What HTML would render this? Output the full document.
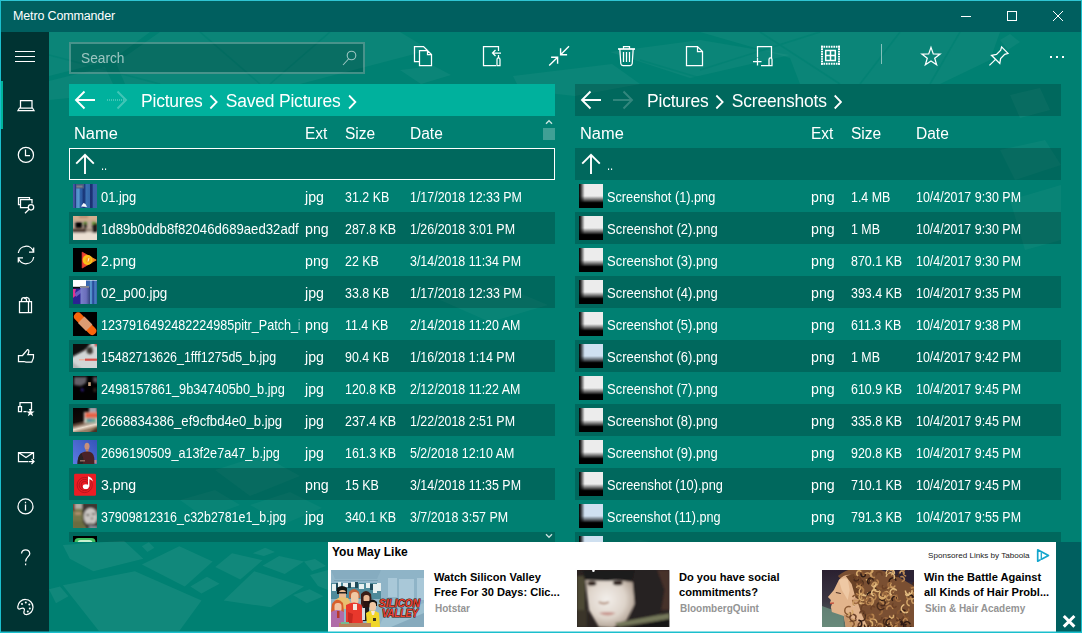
<!DOCTYPE html>
<html><head><meta charset="utf-8"><title>Metro Commander</title>
<style>
*{box-sizing:border-box;margin:0;padding:0}
html,body{width:1082px;height:633px;overflow:hidden}
body{background:#008072;font-family:"Liberation Sans",sans-serif;color:#fff;position:relative}
.frame{position:absolute;left:0;top:0;width:1082px;height:633px;border:1px solid #1bbfcd;border-top-color:#2fc5d3;z-index:50;pointer-events:none;box-shadow:inset 0 -1px 0 rgba(27,191,205,.5)}
.title{position:absolute;left:1px;top:1px;width:1080px;height:31px;background:#005f5f}
.title .tt{position:absolute;left:12px;top:8px;font-size:12.5px;color:#fff;letter-spacing:-0.15px}
.side{position:absolute;left:1px;top:32px;width:48px;height:600px;background:#003332}
.side .act{position:absolute;left:0;top:49px;width:2px;height:48px;background:#00b49c}
.ic{position:absolute;fill:none;stroke:#fff;stroke-width:1.3}
.bgp{position:absolute;left:49px;top:32px;width:1032px;height:600px}
.search{position:absolute;left:69px;top:42px;width:296px;height:32px;border:2px solid rgba(255,255,255,.26);background:rgba(0,0,0,.17)}
.search span{position:absolute;left:10px;top:5px;font-size:15px;color:rgba(255,255,255,.6);transform:scaleX(.915);transform-origin:0 50%}
.pane{position:absolute;top:84px;width:486px;height:458px;overflow:hidden}
.lp{left:69px}.rp{left:575px}
.crumb{position:absolute;left:0;top:0;width:486px;height:32px;background:rgba(0,0,0,.185)}
.lp .crumb{background:#00b19d}
.crumb svg{position:absolute;fill:none;stroke:#fff;stroke-width:1.8}
.crumb .nav{left:0;top:0;width:70px;height:32px;stroke-width:1.9}
.crumb .ct{position:absolute;left:72px;top:7px;font-size:18px;white-space:nowrap;letter-spacing:-0.2px;transform:scaleX(.97);transform-origin:0 50%}
.crumb .sep{position:relative;display:inline-block;width:10px;height:16px;vertical-align:-3px;margin:0 2.2px}
.hdr{position:absolute;left:0;top:32px;width:486px;height:32px;font-size:16px}
.hdr span{position:absolute;top:9px;transform:scaleX(.97);transform-origin:0 50%}
.hdr .c1{transform:scaleX(1.025)}
.c1{left:5px}.c2{left:236px}.c3{left:276px}.c4{left:341px}
.list{position:absolute;left:0;top:64px;width:486px;height:394px;overflow:hidden}
.row{position:relative;height:32px;width:486px;font-size:14.5px;white-space:nowrap}
.row.dk{background:rgba(0,0,0,.185)}
.row span{position:absolute;top:9px}
.row .c1{left:32px;width:216px;overflow:hidden}
.row .c2{transform:scaleX(.978)}
.lp .row.up{border:1px solid #fff}
.row .upa{position:absolute;left:0;top:0;width:32px;height:32px;fill:none;stroke:#fff;stroke-width:1.9}
.row .dots{left:32px;top:10px;font-size:13px}
.lp .row.up .upa{left:-1px;top:-1px}.lp .row.up .dots{left:31px;top:9px}
.fwd{opacity:.2}.lp .fwd{opacity:.26}.lp .fwd .sh{stroke-dasharray:1 1}
.th{position:absolute;left:4px;top:4px;width:24px;height:24px}
.ad{position:absolute;left:328px;top:542px;width:728px;height:90px;background:#fff;color:#000}
.adx{position:absolute;left:1056px;top:542px;width:25px;height:90px;background:#005f5f}

.row span{transform:scaleX(.857);transform-origin:0 50%}
svg.ov{position:absolute;left:0;top:0;width:1082px;height:633px;fill:none;stroke:#fff;stroke-width:1.25;stroke-linejoin:miter}
.ad .h{position:absolute;left:4px;top:3px;font-size:12px;font-weight:bold;color:#000}
.ad .sp{position:absolute;left:600px;top:9px;font-size:8.1px;color:#222;white-space:nowrap}
.ad .t{position:absolute;top:28px;font-size:11.1px;font-weight:bold;line-height:14.5px;color:#000;white-space:nowrap}
.ad .s{position:absolute;top:61px;font-size:10px;font-weight:bold;color:#949494;white-space:nowrap;margin-left:1px}
.ad svg.im{position:absolute;top:28px;width:93px;height:57px}
.scb{position:absolute;left:543px;top:128px;width:12px;height:12px;background:rgba(255,255,255,.25)}
</style></head>
<body>
<svg width="0" height="0" style="position:absolute"><defs>
<linearGradient id="sgx" x1="0" x2="1" y1="0" y2="0"><stop offset="0" stop-color="#000" stop-opacity="1"/><stop offset=".07" stop-color="#000" stop-opacity=".8"/><stop offset=".24" stop-color="#000" stop-opacity="0"/></linearGradient>
<linearGradient id="sgy" x1="0" x2="0" y1="0" y2="1"><stop offset=".5" stop-color="#000" stop-opacity="0"/><stop offset=".78" stop-color="#000" stop-opacity="1"/><stop offset="1" stop-color="#000" stop-opacity="1"/></linearGradient>
</defs></svg>
<div class="title"><span class="tt">Metro Commander</span></div>
<div class="side"><div class="act"></div></div>
<svg class="bgp" viewBox="49 32 1032 600"><g fill="#fff" fill-opacity=".065"><path d="M62.9 545.0L123.9 540.8L143.3 558.8L93.4 571.3L69.8 558.8z"/><path d="M141.9 564.4L179.3 546.3L212.6 561.6L184.8 586.5z"/><path d="M62.9 585.2L134.9 571.3L201.5 600.4L179.3 631.0L98.9 631.0z"/><path d="M190.4 586.5L207.0 576.8L219.5 583.8L201.5 593.5z"/><path d="M215.3 567.1L232.0 553.3L262.5 560.2L240.3 579.6z"/><path d="M223.7 600.4L254.2 571.3L304.0 586.5L270.8 607.3z"/><path d="M262.5 565.7L279.1 556.0L304.0 561.6L284.7 574.0z"/><path d="M141.9 546.3L148.8 542.2L154.4 547.7L147.4 551.9z"/><path d="M49.0 589.3L60.0 586.5L68.4 596.2L56.0 603.2z"/><path d="M252.8 553.3L265.2 547.7L275.0 551.9L263.9 556.0z"/><path d="M293.0 594.9L309.6 589.3L323.5 596.2L306.8 603.2z"/><path d="M304.0 561.6L315.0 559.0L326.0 566.0L312.0 571.0z"/><path d="M310.0 575.0L328.0 570.0L328.0 590.0L318.0 586.0z"/></g><g fill="#fff" fill-opacity=".045"><path d="M49.0 32.0L150.0 32.0L112.0 60.0L49.0 76.0z"/><path d="M160.0 32.0L400.0 32.0L430.0 50.0L300.0 84.0L125.0 84.0L116.0 63.0z"/><path d="M49.0 81.0L105.0 67.0L113.0 84.0L69.0 98.0L49.0 100.0z"/><path d="M400.0 70.0L434.0 66.0L451.0 75.0L421.0 84.0z"/><path d="M513.0 76.0L612.0 64.0L640.0 84.0L575.0 96.0L520.0 90.0z"/><path d="M610.0 52.0L700.0 40.0L790.0 55.0L690.0 78.0z"/><path d="M700.0 32.0L1000.0 32.0L990.0 60.0L940.0 84.0L800.0 84.0L790.0 58.0z"/><path d="M1000.0 40.0L1010.0 34.0L1020.0 42.0L1008.0 50.0z"/><path d="M1010.0 95.0L1040.0 88.0L1050.0 110.0L1020.0 118.0z"/></g><g fill="#fff" fill-opacity=".035"><path d="M215.0 470.0L262.0 455.0L300.0 476.0L250.0 496.0z"/><path d="M250.0 505.0L290.0 492.0L322.0 508.0L284.0 524.0z"/><path d="M180.0 500.0L215.0 490.0L240.0 505.0L205.0 518.0z"/><path d="M440.0 300.0L500.0 285.0L548.0 305.0L490.0 322.0z"/><path d="M1000.0 150.0L1045.0 140.0L1061.0 165.0L1015.0 180.0z"/><path d="M1010.0 200.0L1061.0 185.0L1061.0 240.0L1025.0 250.0z"/><path d="M600.0 545.0L640.0 540.0L650.0 542.0L610.0 542.0z"/></g><g stroke="#008072" stroke-opacity=".7" stroke-width="1.600" fill="none"><path d="M200 32L260 84M330 32L270 84M49 55L160 84M760 32L840 84M900 32L860 84M960 32L930 84M640 60L720 84M820 32L700 70"/></g></svg>
<div class="search"><span>Search</span></div>
<div class="pane lp">
<div class="crumb"><svg class="nav" viewBox="0 0 70 32"><path d="M26 16H7.500M15.500 7.500L7 16l8.500 8.500"/><g class="fwd"><path d="M48.500 7.500L57 16l-8.500 8.500"/><path class="sh" d="M38 16H56.500"/></g></svg><span class="ct">Pictures <svg class="sep" viewBox="0 0 10 16"><path d="M1.5 1.5L8 8l-6.5 6.5"/></svg> Saved Pictures <svg class="sep" viewBox="0 0 10 16"><path d="M1.5 1.5L8 8l-6.5 6.5"/></svg></span></div>
<div class="hdr"><span class="c1">Name</span><span class="c2">Ext</span><span class="c3">Size</span><span class="c4">Date</span></div>
<div class="list">
<div class="row up dk"><svg class="upa" viewBox="0 0 32 32"><path d="M16 26V6.500M7.200 15.600L16 6.800L24.800 15.600"/></svg><span class="dots">..</span></div>
<div class="row"><svg class="th" viewBox="0 0 24 24"><defs><linearGradient id="g1" x1="0" x2="1" y1="0" y2="0"><stop offset="0" stop-color="#4c5ca4"/><stop offset=".08" stop-color="#3a4c98"/><stop offset=".11" stop-color="#1e3a7c"/><stop offset=".15" stop-color="#4f8cc8"/><stop offset=".25" stop-color="#5a9ad0"/><stop offset=".3" stop-color="#2e62a8"/><stop offset=".38" stop-color="#2a58a0"/><stop offset=".42" stop-color="#1a3878"/><stop offset=".5" stop-color="#1c3c80"/><stop offset=".54" stop-color="#3a72b4"/><stop offset=".7" stop-color="#3468ac"/><stop offset=".73" stop-color="#1a2f70"/><stop offset=".8" stop-color="#1c3274"/><stop offset=".84" stop-color="#3a62a8"/><stop offset="1" stop-color="#3c64a8"/></linearGradient><filter id="b1"><feGaussianBlur stdDeviation=".7"/></filter></defs><rect width="24" height="24" fill="url(#g1)"/><g filter="url(#b1)"><rect x="3" y="0" width="8" height="4.500" fill="#4a5a80"/><rect x="3.500" y="1.500" width="6" height="2" fill="#7a8088"/><path d="M8 22.500l2.500-3.500 2 1 1.500 3z" fill="#f4f8fc"/></g></svg><span class="c1" style="transform:scaleX(0.891);width:222.8px">01.jpg</span><span class="c2">jpg</span><span class="c3">31.2 KB</span><span class="c4">1/17/2018 12:33 PM</span></div>
<div class="row dk"><svg class="th" viewBox="0 0 24 24"><defs><filter id="b2"><feGaussianBlur stdDeviation=".8"/></filter><clipPath id="k2"><rect width="24" height="24"/></clipPath></defs><g clip-path="url(#k2)"><rect width="24" height="24" fill="#bcaa9a"/><g filter="url(#b2)"><rect x="-2" y="-2" width="28" height="6.500" fill="#d6ae8e"/><rect x="6" y="0" width="9" height="1.500" fill="#a06a50"/><rect x="-2" y="16" width="28" height="10" fill="#eadfd2"/><rect x="2.500" y="6" width="6.500" height="6" fill="#020202"/><rect x="11" y="7" width="2.500" height="5.500" fill="#1e1a18"/><rect x="10.500" y="5.500" width="3.500" height="2" fill="#5a8a28"/><rect x="19.500" y="7" width="5" height="10" fill="#1a1614"/><rect x="19" y="5.500" width="3.500" height="2.500" fill="#6a9a30"/><rect x="-1" y="13" width="14" height="3.500" fill="#3c2a20"/><rect x="13" y="13.500" width="6" height="2" fill="#8a7a6c"/></g></g></svg><span class="c1" style="transform:scaleX(0.908);width:218.6px">1d89b0ddb8f82046d689aed32adf</span><span class="c2">png</span><span class="c3">287.8 KB</span><span class="c4">1/26/2018 3:01 PM</span></div>
<div class="row"><svg class="th" viewBox="0 0 24 24"><defs><linearGradient id="g3" x1="0" x2="1" y1="0" y2="0"><stop offset="0" stop-color="#f03a34"/><stop offset=".5" stop-color="#f46a22"/><stop offset="1" stop-color="#f8981c"/></linearGradient></defs><rect width="24" height="24" fill="#000"/><path d="M9.200 4.200L23.200 12 9.200 20z" fill="url(#g3)" stroke="url(#g3)" stroke-width=".8" stroke-linejoin="round"/><circle cx="14.600" cy="12" r="5" fill="#f9c21a"/><circle cx="15.200" cy="12" r="2.700" fill="#f8a01c"/><path d="M15 13.500l1-3.500" stroke="#fff4d8" stroke-width=".9"/></svg><span class="c1" style="transform:scaleX(0.968);width:205.1px">2.png</span><span class="c2">png</span><span class="c3">22 KB</span><span class="c4">3/14/2018 11:34 PM</span></div>
<div class="row dk"><svg class="th" viewBox="0 0 24 24"><defs><linearGradient id="g4" x1="0" x2="1" y1="0" y2="0"><stop offset="0" stop-color="#3464ac"/><stop offset=".3" stop-color="#3a6ab0"/><stop offset=".4" stop-color="#5a9ad0"/><stop offset=".52" stop-color="#4a86c4"/><stop offset=".58" stop-color="#2a4a98"/><stop offset=".7" stop-color="#2c50a0"/><stop offset=".76" stop-color="#4a80c0"/><stop offset=".9" stop-color="#3f74b8"/><stop offset="1" stop-color="#2a4488"/></linearGradient><linearGradient id="g4b" x1="0" x2="1" y1="0" y2="0"><stop offset="0" stop-color="#7a82cc"/><stop offset=".6" stop-color="#6a6cba"/><stop offset="1" stop-color="#34447e"/></linearGradient><filter id="b4"><feGaussianBlur stdDeviation=".5"/></filter></defs><rect width="24" height="24" fill="#fff"/><g filter="url(#b4)"><rect x="13" y=".5" width="11.500" height="24" fill="url(#g4)"/><rect x="-1" y="8" width="10" height="17" fill="#2a2292"/><path d="M-1 9h4l-1 4 2 2-3 2-2 2z" fill="#e03092"/><path d="M2 13l6-4v4l-5 4z" fill="#6a5cc0"/><rect x="7.500" y="7" width="9.500" height="18" fill="url(#g4b)"/><rect x="7" y="6" width="9" height="1.800" fill="#8a8a90"/><rect x="0" y="6.800" width="7" height="1.700" fill="#0a0a0a"/></g></svg><span class="c1" style="transform:scaleX(0.924);width:214.8px">02_p00.jpg</span><span class="c2">jpg</span><span class="c3">33.8 KB</span><span class="c4">1/17/2018 12:33 PM</span></div>
<div class="row"><svg class="th" viewBox="0 0 24 24"><rect width="24" height="24" fill="#000"/><path d="M5.100 4.700L19.200 18.800" stroke="#f8660c" stroke-width="8.200" stroke-linecap="round"/><path d="M8.200 7.800L16.200 15.800" stroke="#dc9c72" stroke-width="9"/></svg><span class="c1" style="transform:scaleX(0.870);width:228.2px">1237916492482224985pitr_Patch_i</span><span class="c2">png</span><span class="c3">11.4 KB</span><span class="c4">2/14/2018 11:20 AM</span></div>
<div class="row dk"><svg class="th" viewBox="0 0 24 24"><defs><filter id="b6"><feGaussianBlur stdDeviation=".9"/></filter><clipPath id="k6"><rect width="24" height="24"/></clipPath></defs><g clip-path="url(#k6)"><rect width="24" height="24" fill="#d2d6d6"/><g filter="url(#b6)"><path d="M-3 -3H20L12 6 -3 14z" fill="#0a0808"/><path d="M14 4l5-1.500 1 6-3 2-3.500-2z" fill="#38342e"/><path d="M-2 17L10 26H-2z" fill="#b4b4b4"/><rect x="22" y="-1" width="3" height="3" fill="#b01010"/></g><rect x="12" y="14.600" width="12" height="2.200" fill="#d8524a"/><rect x="6" y="15" width="6" height="1.500" fill="#eab4a4"/></g></svg><span class="c1" style="transform:scaleX(0.857);width:231.6px">15482713626_1fff1275d5_b.jpg</span><span class="c2">jpg</span><span class="c3">90.4 KB</span><span class="c4">1/16/2018 1:14 PM</span></div>
<div class="row"><svg class="th" viewBox="0 0 24 24"><defs><filter id="b7"><feGaussianBlur stdDeviation="1"/></filter><clipPath id="k7"><rect width="24" height="24"/></clipPath></defs><g clip-path="url(#k7)"><rect width="24" height="24" fill="#020202"/><g filter="url(#b7)"><path d="M1 1h13l-1 6-5 3-7-1z" fill="#646068"/><path d="M20 1h5v6l-5-1z" fill="#56525a"/><rect x="21" y="12" width="1.500" height="4" fill="#5a4030"/><path d="M8 12l3 1.500-1 2-2-.5z" fill="#34208a"/></g><rect x="15.200" y="6" width="2.800" height="4" fill="#dab48a" filter="url(#b7)" opacity=".0"/><rect x="15.200" y="6.200" width="2.600" height="3.800" fill="#d8b088" opacity=".9"/></g></svg><span class="c1" style="transform:scaleX(0.880);width:225.6px">2498157861_9b347405b0_b.jpg</span><span class="c2">jpg</span><span class="c3">120.8 KB</span><span class="c4">2/12/2018 11:22 AM</span></div>
<div class="row dk"><svg class="th" viewBox="0 0 24 24"><defs><filter id="b8"><feGaussianBlur stdDeviation=".8"/></filter><linearGradient id="g8" x1="0" x2=".25" y1="0" y2="1"><stop offset="0" stop-color="#060404"/><stop offset=".58" stop-color="#120a08"/><stop offset=".7" stop-color="#6a5040"/><stop offset=".86" stop-color="#eadccc"/><stop offset="1" stop-color="#9a8068"/></linearGradient><clipPath id="k8"><rect width="24" height="24"/></clipPath></defs><g clip-path="url(#k8)"><rect width="24" height="24" fill="url(#g8)"/><g filter="url(#b8)"><rect x="16" y="-1" width="8" height="5" fill="#a4a4ac"/><rect x="11" y="4" width="14" height="11.500" fill="#dcd4cc"/><rect x="12" y="4.500" width="13" height="5.500" fill="#e66446"/><rect x="13" y="10.500" width="10" height="4" fill="#62a48c"/><rect x="15" y="11" width="4" height="2" fill="#3a78a8"/><path d="M14 26L26 18v8z" fill="#4a3024"/></g></g></svg><span class="c1" style="transform:scaleX(0.906);width:219.1px">2668834386_ef9cfbd4e0_b.jpg</span><span class="c2">jpg</span><span class="c3">237.4 KB</span><span class="c4">1/22/2018 2:51 PM</span></div>
<div class="row"><svg class="th" viewBox="0 0 24 24"><defs><filter id="b9"><feGaussianBlur stdDeviation=".7"/></filter><linearGradient id="g9" x1="1" x2="0" y1="0" y2="1"><stop offset="0" stop-color="#3654b8"/><stop offset="1" stop-color="#5c7ae4"/></linearGradient><clipPath id="k9"><rect width="24" height="24"/></clipPath></defs><g clip-path="url(#k9)"><rect width="24" height="24" fill="url(#g9)"/><g filter="url(#b9)"><ellipse cx="14" cy="6.300" rx="2.500" ry="3.600" fill="#c8907a"/><rect x="12.800" y="9" width="2.600" height="3" fill="#b87c68"/><path d="M4.500 25c0-8 2-13.500 9.500-13.500S21.500 17 21.500 25z" fill="#4c2428"/><path d="M4.500 25c0-6 1-10 4-12l2 6-1 6z" fill="#2a2020"/><rect x="21.500" y="20" width="2" height="3.500" fill="#c08878"/><rect x="7" y="20" width="5" height="1.500" fill="#8a6a60"/></g></g></svg><span class="c1" style="transform:scaleX(0.873);width:227.4px">2696190509_a13f2e7a47_b.jpg</span><span class="c2">jpg</span><span class="c3">161.3 KB</span><span class="c4">5/2/2018 12:10 AM</span></div>
<div class="row dk"><svg class="th" viewBox="0 0 24 24"><rect x="1.100" y="1.800" width="21.900" height="21.900" rx="1.300" fill="#ec1c24"/><g fill="none" stroke="#b8141c" stroke-width="1"><circle cx="11.700" cy="13" r="7.600"/><circle cx="11.700" cy="13" r="5.600"/><circle cx="11.700" cy="13" r="3.600"/></g><ellipse cx="12.800" cy="14.700" rx="3" ry="2.400" fill="#fff"/><path d="M15 14.700V4.200c2.500.8 4.600 2.300 4.800 5.300-1.200-1.600-2.600-2.200-3.400-2.300v7.500z" fill="#fff"/></svg><span class="c1" style="transform:scaleX(0.970);width:204.6px">3.png</span><span class="c2">png</span><span class="c3">15 KB</span><span class="c4">3/14/2018 11:35 PM</span></div>
<div class="row"><svg class="th" viewBox="0 0 24 24"><defs><filter id="b11"><feGaussianBlur stdDeviation=".9"/></filter><clipPath id="k11"><rect width="24" height="24"/></clipPath></defs><g clip-path="url(#k11)"><rect width="24" height="24" fill="#76764a"/><g filter="url(#b11)"><rect x="2" y="-1" width="8" height="6" fill="#b4aca4"/><rect x="-1" y="-1" width="3" height="8" fill="#6a3028"/><rect x="2" y="8" width="6" height="3" fill="#b09070"/><rect x="-1" y="17" width="12" height="8" fill="#6a6c40"/><path d="M9 -1h16v26H14L10 18z" fill="#3c3632"/><ellipse cx="17.500" cy="12.500" rx="6.800" ry="8.500" fill="#cac6c2"/><ellipse cx="14.800" cy="11" rx="1.800" ry="1" fill="#5a5650"/><ellipse cx="20.500" cy="10" rx="1.800" ry="1" fill="#5a5650"/><ellipse cx="19" cy="14.500" rx="1.300" ry="1" fill="#6a6660"/><rect x="15" y="19" width="5" height="1.300" fill="#5a5652"/><rect x="16" y="22" width="8" height="3" fill="#8a8c9a"/></g></g></svg><span class="c1" style="transform:scaleX(0.857);width:231.6px">37909812316_c32b2781e1_b.jpg</span><span class="c2">jpg</span><span class="c3">340.1 KB</span><span class="c4">3/7/2018 3:57 PM</span></div>
<div class="row dk"><svg class="th" viewBox="0 0 24 24"><rect width="24" height="24" fill="#000"/><rect x="1.500" y="2" width="21" height="20" rx="4" fill="#3fc060"/><rect x="4.500" y="4" width="15" height="16" rx="3" fill="#c8f0d0"/></svg><span class="c1" style="transform:scaleX(1.000);width:198.5px"></span><span class="c2"></span><span class="c3"></span><span class="c4"></span></div>
</div></div>
<div class="pane rp">
<div class="crumb"><svg class="nav" viewBox="0 0 70 32"><path d="M26 16H7.500M15.500 7.500L7 16l8.500 8.500"/><g class="fwd"><path d="M48.500 7.500L57 16l-8.500 8.500"/><path class="sh" d="M38 16H56.500"/></g></svg><span class="ct">Pictures <svg class="sep" viewBox="0 0 10 16"><path d="M1.5 1.5L8 8l-6.5 6.5"/></svg> Screenshots <svg class="sep" viewBox="0 0 10 16"><path d="M1.5 1.5L8 8l-6.5 6.5"/></svg></span></div>
<div class="hdr"><span class="c1">Name</span><span class="c2">Ext</span><span class="c3">Size</span><span class="c4">Date</span></div>
<div class="list">
<div class="row up dk"><svg class="upa" viewBox="0 0 32 32"><path d="M16 26V6.500M7.200 15.600L16 6.800L24.800 15.600"/></svg><span class="dots">..</span></div>
<div class="row"><svg class="th" viewBox="0 0 24 24"><rect width="24" height="24" fill="#ececec"/><rect width="24" height="24" fill="url(#sgx)"/><rect width="24" height="24" fill="url(#sgy)"/></svg><span class="c1" style="transform:scaleX(0.878);width:226.1px">Screenshot (1).png</span><span class="c2">png</span><span class="c3">1.4 MB</span><span class="c4">10/4/2017 9:30 PM</span></div>
<div class="row dk"><svg class="th" viewBox="0 0 24 24"><rect width="24" height="24" fill="#ececec"/><rect width="24" height="24" fill="url(#sgx)"/><rect width="24" height="24" fill="url(#sgy)"/></svg><span class="c1" style="transform:scaleX(0.898);width:221.0px">Screenshot (2).png</span><span class="c2">png</span><span class="c3">1 MB</span><span class="c4">10/4/2017 9:30 PM</span></div>
<div class="row"><svg class="th" viewBox="0 0 24 24"><rect width="24" height="24" fill="#ececec"/><rect width="24" height="24" fill="url(#sgx)"/><rect width="24" height="24" fill="url(#sgy)"/></svg><span class="c1" style="transform:scaleX(0.898);width:221.0px">Screenshot (3).png</span><span class="c2">png</span><span class="c3">870.1 KB</span><span class="c4">10/4/2017 9:30 PM</span></div>
<div class="row dk"><svg class="th" viewBox="0 0 24 24"><rect width="24" height="24" fill="#ececec"/><rect width="24" height="24" fill="url(#sgx)"/><rect width="24" height="24" fill="url(#sgy)"/></svg><span class="c1" style="transform:scaleX(0.898);width:221.0px">Screenshot (4).png</span><span class="c2">png</span><span class="c3">393.4 KB</span><span class="c4">10/4/2017 9:35 PM</span></div>
<div class="row"><svg class="th" viewBox="0 0 24 24"><rect width="24" height="24" fill="#ececec"/><rect width="24" height="24" fill="url(#sgx)"/><rect width="24" height="24" fill="url(#sgy)"/></svg><span class="c1" style="transform:scaleX(0.898);width:221.0px">Screenshot (5).png</span><span class="c2">png</span><span class="c3">611.3 KB</span><span class="c4">10/4/2017 9:38 PM</span></div>
<div class="row dk"><svg class="th" viewBox="0 0 24 24"><rect width="24" height="24" fill="#cfe0f0"/><rect width="24" height="24" fill="url(#sgx)"/><rect width="24" height="24" fill="url(#sgy)"/></svg><span class="c1" style="transform:scaleX(0.898);width:221.0px">Screenshot (6).png</span><span class="c2">png</span><span class="c3">1 MB</span><span class="c4">10/4/2017 9:42 PM</span></div>
<div class="row"><svg class="th" viewBox="0 0 24 24"><rect width="24" height="24" fill="#ececec"/><rect width="24" height="24" fill="url(#sgx)"/><rect width="24" height="24" fill="url(#sgy)"/></svg><span class="c1" style="transform:scaleX(0.898);width:221.0px">Screenshot (7).png</span><span class="c2">png</span><span class="c3">610.9 KB</span><span class="c4">10/4/2017 9:45 PM</span></div>
<div class="row dk"><svg class="th" viewBox="0 0 24 24"><rect width="24" height="24" fill="#ececec"/><rect width="24" height="24" fill="url(#sgx)"/><rect width="24" height="24" fill="url(#sgy)"/></svg><span class="c1" style="transform:scaleX(0.898);width:221.0px">Screenshot (8).png</span><span class="c2">png</span><span class="c3">335.8 KB</span><span class="c4">10/4/2017 9:45 PM</span></div>
<div class="row"><svg class="th" viewBox="0 0 24 24"><rect width="24" height="24" fill="#ececec"/><rect width="24" height="24" fill="url(#sgx)"/><rect width="24" height="24" fill="url(#sgy)"/></svg><span class="c1" style="transform:scaleX(0.898);width:221.0px">Screenshot (9).png</span><span class="c2">png</span><span class="c3">920.8 KB</span><span class="c4">10/4/2017 9:45 PM</span></div>
<div class="row dk"><svg class="th" viewBox="0 0 24 24"><rect width="24" height="24" fill="#ececec"/><rect width="24" height="24" fill="url(#sgx)"/><rect width="24" height="24" fill="url(#sgy)"/></svg><span class="c1" style="transform:scaleX(0.882);width:225.1px">Screenshot (10).png</span><span class="c2">png</span><span class="c3">710.1 KB</span><span class="c4">10/4/2017 9:45 PM</span></div>
<div class="row"><svg class="th" viewBox="0 0 24 24"><rect width="24" height="24" fill="#cfe0f0"/><rect width="24" height="24" fill="url(#sgx)"/><rect width="24" height="24" fill="url(#sgy)"/></svg><span class="c1" style="transform:scaleX(0.872);width:227.6px">Screenshot (11).png</span><span class="c2">png</span><span class="c3">791.3 KB</span><span class="c4">10/4/2017 9:55 PM</span></div>
<div class="row dk"><svg class="th" viewBox="0 0 24 24"><rect width="24" height="24" fill="#cfe0f0"/><rect width="24" height="24" fill="url(#sgx)"/><rect width="24" height="24" fill="url(#sgy)"/></svg><span class="c1" style="transform:scaleX(1.000);width:198.5px"></span><span class="c2"></span><span class="c3"></span><span class="c4"></span></div>
</div></div>
<div class="ad"><span class="h">You May Like</span><span class="sp">Sponsored Links by Taboola</span>
<svg class="im" style="left:3px" viewBox="0 0 93 57"><rect width="93" height="57" fill="#8fb4c7"/>
<path d="M0 0h50l-4 9H4z" fill="#86acc0"/><path d="M3 10h44v1H3z" fill="#7aa2b6"/>
<rect x="57" y="8" width="9" height="19" fill="#a9c8d8"/><rect x="68" y="9" width="15" height="20" fill="#a9c8d8"/><rect x="86" y="8" width="7" height="22" fill="#a9c8d8"/>
<path d="M52 48L93 33v24H48z" fill="#9dc0d0"/><path d="M60 57l33-14v14z" fill="#86aabd"/>
<path d="M0 13h50v16H0z" fill="#4f8a9a"/><g fill="#e8f0f0"><rect x="1" y="14" width="4" height="7"/><rect x="7" y="12" width="3" height="5"/><rect x="12" y="13" width="5" height="4"/><rect x="20" y="12" width="4" height="5"/><rect x="28" y="14" width="5" height="5"/><rect x="35" y="13" width="4" height="5"/><rect x="42" y="14" width="4" height="9"/><rect x="46" y="13" width="4" height="8"/></g>
<g fill="#1e4a5a"><rect x="5" y="13" width="2" height="8"/><rect x="17" y="13" width="3" height="5"/><rect x="24" y="12" width="3" height="6"/><rect x="39" y="14" width="3" height="6"/></g>
<path d="M6 18q5-4 10 0v6H6z" fill="#141210"/><rect x="8" y="20" width="7" height="10" rx="3" fill="#e8b890"/><rect x="8" y="22" width="7" height="1.500" fill="#222"/><path d="M4 30l5-3 8 1 3 5v6H4z" fill="#e8c070"/>
<path d="M18 22q5-6 10 0l1 6H18z" fill="#c4623a"/><rect x="20" y="22" width="7.500" height="12" rx="3.500" fill="#f0c8a4"/>
<path d="M15 35q8-5 16 0l1 22H15z" fill="#e8382c"/><rect x="22" y="34" width="4" height="6" fill="#f4e8e0"/><path d="M17 42l5 2-1 10-4 1z" fill="#c82820"/>
<path d="M30 24q5-6 10 0l1 10-3 4h-6l-2-4z" fill="#3a1e18"/><rect x="32.500" y="25" width="6" height="7" rx="2.500" fill="#e8b894"/><path d="M32 31h7l-1 6h-5z" fill="#2a1410"/><rect x="32" y="37" width="6" height="14" fill="#1a1a1c"/><rect x="31" y="38" width="3" height="12" fill="#d8dce0"/>
<path d="M1 34q5-8 11-1l1 9H0z" fill="#d8602c"/><rect x="3.500" y="33" width="7" height="9" rx="3" fill="#f0c4a4"/><path d="M0 42q6-4 13 0v15H0z" fill="#b06ca8"/><rect x="6" y="41" width="2.500" height="7" fill="#b83a2a"/>
<path d="M37.500 32q4-5 8.500 0v4h-8.500z" fill="#141210"/><rect x="38.500" y="32" width="6.500" height="9" rx="3" fill="#f0c8a4"/><path d="M35 43q6-5 13 0l1 14H36z" fill="#f0d628"/><path d="M40 41h4l-1 4h-2z" fill="#f4e8e0"/><rect x="42" y="48" width="3" height="3" fill="#3a3420"/>
<rect x="8" y="53" width="32" height="4" fill="#b8845c"/><rect x="10" y="52" width="8" height="2" fill="#78b890"/>
<g font-family="Liberation Sans,sans-serif" font-weight="bold" font-style="italic" font-size="10.500" stroke="#2a0c08" stroke-width="1.100" fill="#ee4430" paint-order="stroke"><text x="48" y="37" textLength="41" lengthAdjust="spacingAndGlyphs">SILICON</text><text x="51" y="46.500" textLength="36" lengthAdjust="spacingAndGlyphs">VALLEY</text></g>
</svg>
<div class="t" style="left:106px">Watch Silicon Valley<br>Free For 30 Days: Clic...</div><div class="s" style="left:106px">Hotstar</div>
<svg class="im" style="left:249px;width:92.5px" viewBox="0 0 93 57" preserveAspectRatio="none"><defs><filter id="fb2" x="-10%" y="-10%" width="120%" height="120%"><feGaussianBlur stdDeviation="1.100"/></filter><radialGradient id="fg2" cx=".42" cy=".45" r=".6"><stop offset="0" stop-color="#f2eeea"/><stop offset=".6" stop-color="#ded4ca"/><stop offset="1" stop-color="#a8988a"/></radialGradient><clipPath id="c2"><rect width="93" height="57"/></clipPath></defs>
<g clip-path="url(#c2)"><rect width="93" height="57" fill="#2b2422"/><g filter="url(#fb2)">
<rect x="76" y="0" width="17" height="40" fill="#46302a"/><rect x="0" y="6" width="8" height="40" fill="#4e4a34"/><rect x="0" y="40" width="10" height="17" fill="#3a342c"/>
<path d="M8 6L58 8L60 30L50 50L36 58L22 57L12 40z" fill="url(#fg2)"/>
<path d="M4 -2H80L88 20L84 44L66 50L52 50L58 34L56 12L30 9L8 10z" fill="#262020"/>
<path d="M6 0h52l-2 9-26 2-22-1z" fill="#1e1a1a"/>
<path d="M38 53L93 43v6L42 57z" fill="#74785a"/><path d="M44 58L93 49v9z" fill="#161616"/>
<ellipse cx="15" cy="13.500" rx="4.500" ry="2.200" fill="#2a1c18"/><ellipse cx="41" cy="13" rx="5" ry="2.300" fill="#2a1c18"/>
<path d="M22 32q5 3 10 0" stroke="#b08c78" stroke-width="2" fill="none"/><path d="M22 43q8-2 17 0q-8 5-17 0z" fill="#c89890"/></g>
<circle cx="16.500" cy=".8" r="1.300" fill="#fff"/></g></svg>
<div class="t" style="left:351px">Do you have social<br>commitments?</div><div class="s" style="left:351px">BloombergQuint</div>
<svg class="im" style="left:494px;width:92px" viewBox="0 0 93 57" preserveAspectRatio="none"><defs><filter id="fb3"><feGaussianBlur stdDeviation=".55"/></filter><linearGradient id="bg3" x1="0" x2="0" y1="0" y2="1"><stop offset="0" stop-color="#2a2030"/><stop offset=".55" stop-color="#3c3844"/><stop offset="1" stop-color="#5c7468"/></linearGradient><clipPath id="c3"><rect width="93" height="57"/></clipPath></defs>
<g clip-path="url(#c3)"><rect width="93" height="57" fill="url(#bg3)"/><path d="M0 36L22 44v13H0z" fill="#6c9080" opacity=".8"/><rect x="60" y="0" width="33" height="12" fill="#2c2234"/>
<g filter="url(#fb3)"><path d="M16 6Q28 -4 50 -3L72 4L93 16V57H40L34 40L30 20z" fill="#7a5030"/>
<path d="M17 10Q22 4 30 5L38 14L36 32L40 44L46 57H24L22 46L10 42L9 37L10 34L8 33L9 30L6 27L12 20z" fill="#e2b48c"/>
<path d="M17 10Q22 7 26 9L28 20L26 30L20 20z" fill="#eec8a4"/><path d="M24 6L32 4L40 16L38 30L34 28L30 14z" fill="#6a4226"/><path d="M22 44L30 48L46 57H24z" fill="#c8966c"/>
<path d="M14 22.500l5 1" stroke="#4a2c20" stroke-width="1"/><path d="M8 33.500l4-.5" stroke="#c0503c" stroke-width="1.400"/><ellipse cx="33.500" cy="31" rx="2" ry="3" fill="#d09c78"/><circle cx="32.500" cy="35.500" r=".9" fill="#e8f0f4"/>
<g fill="none" stroke-width="1.500"><circle cx="47.0" cy="7.1" r="3.4" stroke="#d8aa6c" stroke-dasharray="11.8 9.4" transform="rotate(295 47.0 7.1)"/><circle cx="53.7" cy="12.4" r="3.1" stroke="#b88450" stroke-dasharray="10.9 8.7" transform="rotate(297 53.7 12.4)"/><circle cx="68.5" cy="54.9" r="3.2" stroke="#e4bc80" stroke-dasharray="11.1 8.9" transform="rotate(17 68.5 54.9)"/><circle cx="39.7" cy="31.4" r="2.1" stroke="#e4bc80" stroke-dasharray="7.4 5.9" transform="rotate(51 39.7 31.4)"/><circle cx="69.4" cy="20.3" r="3.1" stroke="#d8aa6c" stroke-dasharray="10.9 8.7" transform="rotate(203 69.4 20.3)"/><circle cx="67.9" cy="27.8" r="3.1" stroke="#a06c40" stroke-dasharray="10.8 8.6" transform="rotate(167 67.9 27.8)"/><circle cx="89.6" cy="19.7" r="2.4" stroke="#8a5a34" stroke-dasharray="8.4 6.7" transform="rotate(251 89.6 19.7)"/><circle cx="41.3" cy="32.5" r="3.1" stroke="#a06c40" stroke-dasharray="10.7 8.6" transform="rotate(262 41.3 32.5)"/><circle cx="44.4" cy="56.8" r="2.1" stroke="#e4bc80" stroke-dasharray="7.3 5.8" transform="rotate(59 44.4 56.8)"/><circle cx="48.3" cy="54.0" r="2.8" stroke="#d8aa6c" stroke-dasharray="9.8 7.9" transform="rotate(275 48.3 54.0)"/><circle cx="64.7" cy="50.5" r="2.6" stroke="#a06c40" stroke-dasharray="8.9 7.1" transform="rotate(213 64.7 50.5)"/><circle cx="65.2" cy="25.4" r="3.8" stroke="#c89860" stroke-dasharray="13.4 10.7" transform="rotate(170 65.2 25.4)"/><circle cx="71.2" cy="1.6" r="3.4" stroke="#6a4028" stroke-dasharray="11.7 9.4" transform="rotate(102 71.2 1.6)"/><circle cx="51.4" cy="38.1" r="1.9" stroke="#6a4028" stroke-dasharray="6.5 5.2" transform="rotate(127 51.4 38.1)"/><circle cx="67.4" cy="27.6" r="2.3" stroke="#c89860" stroke-dasharray="8.1 6.5" transform="rotate(46 67.4 27.6)"/><circle cx="41.6" cy="21.5" r="3.9" stroke="#d8aa6c" stroke-dasharray="13.6 10.9" transform="rotate(59 41.6 21.5)"/><circle cx="52.5" cy="14.7" r="2.1" stroke="#e4bc80" stroke-dasharray="7.5 6.0" transform="rotate(311 52.5 14.7)"/><circle cx="43.8" cy="22.9" r="2.7" stroke="#e4bc80" stroke-dasharray="9.3 7.5" transform="rotate(344 43.8 22.9)"/><circle cx="34.7" cy="8.6" r="2.4" stroke="#4a2c1c" stroke-dasharray="8.2 6.6" transform="rotate(4 34.7 8.6)"/><circle cx="34.3" cy="30.1" r="3.3" stroke="#a06c40" stroke-dasharray="11.4 9.1" transform="rotate(343 34.3 30.1)"/><circle cx="73.0" cy="28.9" r="3.3" stroke="#b88450" stroke-dasharray="11.5 9.2" transform="rotate(164 73.0 28.9)"/><circle cx="85.8" cy="55.1" r="3.4" stroke="#2e1a14" stroke-dasharray="12.0 9.6" transform="rotate(141 85.8 55.1)"/><circle cx="52.3" cy="4.2" r="3.3" stroke="#b88450" stroke-dasharray="11.6 9.3" transform="rotate(68 52.3 4.2)"/><circle cx="93.9" cy="24.4" r="2.1" stroke="#b88450" stroke-dasharray="7.2 5.8" transform="rotate(36 93.9 24.4)"/><circle cx="64.2" cy="30.2" r="4.1" stroke="#b88450" stroke-dasharray="14.3 11.4" transform="rotate(25 64.2 30.2)"/><circle cx="38.8" cy="20.6" r="3.3" stroke="#a06c40" stroke-dasharray="11.6 9.3" transform="rotate(216 38.8 20.6)"/><circle cx="57.7" cy="4.9" r="3.0" stroke="#6a4028" stroke-dasharray="10.4 8.3" transform="rotate(172 57.7 4.9)"/><circle cx="46.1" cy="6.6" r="3.6" stroke="#c89860" stroke-dasharray="12.6 10.1" transform="rotate(172 46.1 6.6)"/><circle cx="73.1" cy="29.0" r="2.3" stroke="#2e1a14" stroke-dasharray="8.0 6.4" transform="rotate(130 73.1 29.0)"/><circle cx="73.0" cy="52.8" r="3.6" stroke="#c89860" stroke-dasharray="12.7 10.1" transform="rotate(352 73.0 52.8)"/><circle cx="85.3" cy="39.8" r="2.4" stroke="#a06c40" stroke-dasharray="8.5 6.8" transform="rotate(326 85.3 39.8)"/><circle cx="49.3" cy="11.4" r="3.1" stroke="#2e1a14" stroke-dasharray="10.8 8.7" transform="rotate(118 49.3 11.4)"/><circle cx="39.8" cy="46.7" r="4.2" stroke="#4a2c1c" stroke-dasharray="14.6 11.7" transform="rotate(290 39.8 46.7)"/><circle cx="82.1" cy="42.4" r="2.3" stroke="#2e1a14" stroke-dasharray="8.2 6.6" transform="rotate(177 82.1 42.4)"/><circle cx="75.9" cy="57.4" r="3.7" stroke="#6a4028" stroke-dasharray="12.9 10.3" transform="rotate(93 75.9 57.4)"/><circle cx="73.2" cy="55.4" r="2.9" stroke="#a06c40" stroke-dasharray="10.1 8.0" transform="rotate(343 73.2 55.4)"/><circle cx="49.9" cy="11.2" r="2.3" stroke="#4a2c1c" stroke-dasharray="8.2 6.6" transform="rotate(121 49.9 11.2)"/><circle cx="58.3" cy="57.1" r="3.3" stroke="#b88450" stroke-dasharray="11.4 9.1" transform="rotate(172 58.3 57.1)"/><circle cx="70.4" cy="46.0" r="2.0" stroke="#d8aa6c" stroke-dasharray="7.0 5.6" transform="rotate(327 70.4 46.0)"/><circle cx="79.5" cy="43.0" r="2.9" stroke="#8a5a34" stroke-dasharray="10.3 8.3" transform="rotate(156 79.5 43.0)"/><circle cx="69.1" cy="3.2" r="4.1" stroke="#e4bc80" stroke-dasharray="14.2 11.4" transform="rotate(166 69.1 3.2)"/><circle cx="57.0" cy="37.4" r="3.3" stroke="#6a4028" stroke-dasharray="11.4 9.1" transform="rotate(236 57.0 37.4)"/><circle cx="48.9" cy="30.9" r="2.1" stroke="#b88450" stroke-dasharray="7.4 5.9" transform="rotate(287 48.9 30.9)"/><circle cx="75.6" cy="4.2" r="2.1" stroke="#4a2c1c" stroke-dasharray="7.5 6.0" transform="rotate(297 75.6 4.2)"/><circle cx="39.0" cy="13.1" r="2.5" stroke="#4a2c1c" stroke-dasharray="8.8 7.0" transform="rotate(274 39.0 13.1)"/><circle cx="47.1" cy="30.7" r="3.8" stroke="#b88450" stroke-dasharray="13.3 10.6" transform="rotate(327 47.1 30.7)"/><circle cx="49.1" cy="25.5" r="3.2" stroke="#2e1a14" stroke-dasharray="11.2 9.0" transform="rotate(151 49.1 25.5)"/><circle cx="89.2" cy="28.1" r="3.1" stroke="#2e1a14" stroke-dasharray="10.8 8.6" transform="rotate(183 89.2 28.1)"/><circle cx="86.0" cy="44.6" r="3.3" stroke="#8a5a34" stroke-dasharray="11.4 9.1" transform="rotate(62 86.0 44.6)"/><circle cx="57.6" cy="41.5" r="3.1" stroke="#a06c40" stroke-dasharray="11.0 8.8" transform="rotate(245 57.6 41.5)"/><circle cx="61.7" cy="26.9" r="3.7" stroke="#2e1a14" stroke-dasharray="12.8 10.3" transform="rotate(20 61.7 26.9)"/><circle cx="37.6" cy="0.5" r="2.0" stroke="#6a4028" stroke-dasharray="7.1 5.7" transform="rotate(202 37.6 0.5)"/><circle cx="78.0" cy="52.7" r="2.9" stroke="#2e1a14" stroke-dasharray="10.0 8.0" transform="rotate(218 78.0 52.7)"/><circle cx="38.2" cy="14.6" r="3.0" stroke="#6a4028" stroke-dasharray="10.6 8.5" transform="rotate(182 38.2 14.6)"/><circle cx="41.6" cy="29.4" r="3.9" stroke="#c89860" stroke-dasharray="13.7 10.9" transform="rotate(332 41.6 29.4)"/><circle cx="53.6" cy="21.5" r="2.6" stroke="#4a2c1c" stroke-dasharray="9.0 7.2" transform="rotate(154 53.6 21.5)"/><circle cx="39.1" cy="16.2" r="2.1" stroke="#8a5a34" stroke-dasharray="7.3 5.9" transform="rotate(338 39.1 16.2)"/><circle cx="69.7" cy="20.0" r="2.4" stroke="#8a5a34" stroke-dasharray="8.4 6.7" transform="rotate(348 69.7 20.0)"/><circle cx="39.6" cy="55.2" r="2.8" stroke="#6a4028" stroke-dasharray="9.6 7.7" transform="rotate(58 39.6 55.2)"/><circle cx="71.4" cy="11.4" r="3.5" stroke="#2e1a14" stroke-dasharray="12.2 9.8" transform="rotate(145 71.4 11.4)"/><circle cx="53.9" cy="19.4" r="2.0" stroke="#a06c40" stroke-dasharray="7.1 5.7" transform="rotate(7 53.9 19.4)"/><circle cx="63.3" cy="24.4" r="1.8" stroke="#a06c40" stroke-dasharray="6.5 5.2" transform="rotate(186 63.3 24.4)"/><circle cx="45.0" cy="55.6" r="2.1" stroke="#4a2c1c" stroke-dasharray="7.2 5.8" transform="rotate(349 45.0 55.6)"/><circle cx="26.8" cy="44.7" r="2.4" stroke="#8a5a34" stroke-dasharray="8.6 6.9" transform="rotate(295 26.8 44.7)"/><circle cx="84.3" cy="38.6" r="4.1" stroke="#e4bc80" stroke-dasharray="14.2 11.4" transform="rotate(53 84.3 38.6)"/><circle cx="89.3" cy="32.2" r="3.5" stroke="#d8aa6c" stroke-dasharray="12.2 9.7" transform="rotate(100 89.3 32.2)"/><circle cx="80.8" cy="9.0" r="2.4" stroke="#b88450" stroke-dasharray="8.6 6.8" transform="rotate(228 80.8 9.0)"/><circle cx="80.9" cy="3.0" r="2.0" stroke="#d8aa6c" stroke-dasharray="6.9 5.5" transform="rotate(163 80.9 3.0)"/><circle cx="48.1" cy="31.2" r="4.0" stroke="#c89860" stroke-dasharray="14.1 11.3" transform="rotate(223 48.1 31.2)"/><circle cx="27.1" cy="40.6" r="4.1" stroke="#8a5a34" stroke-dasharray="14.2 11.3" transform="rotate(94 27.1 40.6)"/><circle cx="36.9" cy="53.9" r="3.3" stroke="#2e1a14" stroke-dasharray="11.6 9.3" transform="rotate(273 36.9 53.9)"/><circle cx="44.6" cy="28.0" r="2.2" stroke="#a06c40" stroke-dasharray="7.8 6.2" transform="rotate(289 44.6 28.0)"/><circle cx="59.9" cy="56.7" r="3.0" stroke="#4a2c1c" stroke-dasharray="10.6 8.5" transform="rotate(336 59.9 56.7)"/><circle cx="31.5" cy="47.1" r="2.8" stroke="#6a4028" stroke-dasharray="9.9 7.9" transform="rotate(196 31.5 47.1)"/><circle cx="87.1" cy="56.2" r="2.5" stroke="#4a2c1c" stroke-dasharray="8.9 7.1" transform="rotate(353 87.1 56.2)"/><circle cx="48.3" cy="47.9" r="3.5" stroke="#8a5a34" stroke-dasharray="12.2 9.8" transform="rotate(145 48.3 47.9)"/><circle cx="48.7" cy="1.3" r="2.1" stroke="#d8aa6c" stroke-dasharray="7.4 5.9" transform="rotate(225 48.7 1.3)"/><circle cx="86.5" cy="23.8" r="1.9" stroke="#e4bc80" stroke-dasharray="6.8 5.4" transform="rotate(313 86.5 23.8)"/><circle cx="71.6" cy="14.9" r="2.4" stroke="#c89860" stroke-dasharray="8.3 6.7" transform="rotate(16 71.6 14.9)"/><circle cx="37.2" cy="14.1" r="1.8" stroke="#a06c40" stroke-dasharray="6.3 5.1" transform="rotate(346 37.2 14.1)"/><circle cx="93.1" cy="30.8" r="2.4" stroke="#c89860" stroke-dasharray="8.4 6.7" transform="rotate(78 93.1 30.8)"/><circle cx="37.0" cy="18.1" r="2.0" stroke="#c89860" stroke-dasharray="7.0 5.6" transform="rotate(180 37.0 18.1)"/><circle cx="38.3" cy="28.3" r="1.8" stroke="#c89860" stroke-dasharray="6.3 5.1" transform="rotate(294 38.3 28.3)"/><circle cx="34.2" cy="33.2" r="2.7" stroke="#c89860" stroke-dasharray="9.6 7.7" transform="rotate(109 34.2 33.2)"/><circle cx="40.5" cy="33.1" r="3.1" stroke="#8a5a34" stroke-dasharray="10.7 8.6" transform="rotate(236 40.5 33.1)"/><circle cx="74.8" cy="50.7" r="2.7" stroke="#a06c40" stroke-dasharray="9.6 7.7" transform="rotate(259 74.8 50.7)"/><circle cx="59.1" cy="15.1" r="3.3" stroke="#8a5a34" stroke-dasharray="11.5 9.2" transform="rotate(15 59.1 15.1)"/><circle cx="83.3" cy="51.5" r="3.3" stroke="#2e1a14" stroke-dasharray="11.6 9.3" transform="rotate(50 83.3 51.5)"/><circle cx="61.2" cy="28.3" r="3.8" stroke="#b88450" stroke-dasharray="13.3 10.7" transform="rotate(297 61.2 28.3)"/><circle cx="65.5" cy="51.6" r="3.4" stroke="#4a2c1c" stroke-dasharray="12.0 9.6" transform="rotate(30 65.5 51.6)"/><circle cx="92.1" cy="20.6" r="2.9" stroke="#b88450" stroke-dasharray="10.1 8.1" transform="rotate(225 92.1 20.6)"/><circle cx="68.5" cy="38.8" r="3.0" stroke="#b88450" stroke-dasharray="10.4 8.3" transform="rotate(164 68.5 38.8)"/><circle cx="29.0" cy="54.0" r="4.0" stroke="#d8aa6c" stroke-dasharray="13.8 11.1" transform="rotate(237 29.0 54.0)"/><circle cx="28.7" cy="42.2" r="2.4" stroke="#d8aa6c" stroke-dasharray="8.4 6.7" transform="rotate(304 28.7 42.2)"/><circle cx="40.7" cy="43.4" r="2.4" stroke="#6a4028" stroke-dasharray="8.2 6.6" transform="rotate(177 40.7 43.4)"/><circle cx="51.2" cy="26.7" r="3.4" stroke="#b88450" stroke-dasharray="12.0 9.6" transform="rotate(222 51.2 26.7)"/><circle cx="69.6" cy="2.6" r="2.2" stroke="#c89860" stroke-dasharray="7.5 6.0" transform="rotate(234 69.6 2.6)"/><circle cx="73.2" cy="35.3" r="2.1" stroke="#6a4028" stroke-dasharray="7.4 5.9" transform="rotate(21 73.2 35.3)"/><circle cx="43.1" cy="38.3" r="3.5" stroke="#6a4028" stroke-dasharray="12.1 9.7" transform="rotate(104 43.1 38.3)"/><circle cx="60.7" cy="25.9" r="2.9" stroke="#d8aa6c" stroke-dasharray="10.2 8.2" transform="rotate(357 60.7 25.9)"/><circle cx="63.0" cy="16.7" r="2.0" stroke="#6a4028" stroke-dasharray="7.0 5.6" transform="rotate(6 63.0 16.7)"/><circle cx="56.6" cy="47.2" r="4.1" stroke="#6a4028" stroke-dasharray="14.4 11.5" transform="rotate(357 56.6 47.2)"/><circle cx="51.5" cy="53.0" r="4.0" stroke="#d8aa6c" stroke-dasharray="14.1 11.3" transform="rotate(209 51.5 53.0)"/><circle cx="34.1" cy="29.4" r="4.1" stroke="#8a5a34" stroke-dasharray="14.3 11.4" transform="rotate(217 34.1 29.4)"/><circle cx="68.8" cy="14.8" r="2.1" stroke="#a06c40" stroke-dasharray="7.2 5.8" transform="rotate(83 68.8 14.8)"/><circle cx="87.7" cy="27.2" r="1.9" stroke="#b88450" stroke-dasharray="6.5 5.2" transform="rotate(341 87.7 27.2)"/><circle cx="72.4" cy="22.3" r="3.5" stroke="#e4bc80" stroke-dasharray="12.4 9.9" transform="rotate(123 72.4 22.3)"/><circle cx="46.4" cy="48.4" r="1.8" stroke="#a06c40" stroke-dasharray="6.3 5.1" transform="rotate(302 46.4 48.4)"/><circle cx="32.5" cy="53.6" r="3.5" stroke="#c89860" stroke-dasharray="12.3 9.8" transform="rotate(91 32.5 53.6)"/><circle cx="85.8" cy="2.6" r="3.6" stroke="#b88450" stroke-dasharray="12.6 10.1" transform="rotate(101 85.8 2.6)"/><circle cx="69.1" cy="6.9" r="4.1" stroke="#e4bc80" stroke-dasharray="14.5 11.6" transform="rotate(183 69.1 6.9)"/><circle cx="37.5" cy="20.4" r="4.1" stroke="#b88450" stroke-dasharray="14.3 11.5" transform="rotate(292 37.5 20.4)"/><circle cx="68.8" cy="52.8" r="4.1" stroke="#2e1a14" stroke-dasharray="14.2 11.4" transform="rotate(73 68.8 52.8)"/><circle cx="29.7" cy="54.0" r="2.8" stroke="#8a5a34" stroke-dasharray="9.8 7.8" transform="rotate(232 29.7 54.0)"/><circle cx="44.3" cy="0.9" r="4.0" stroke="#8a5a34" stroke-dasharray="14.1 11.3" transform="rotate(61 44.3 0.9)"/><circle cx="53.5" cy="14.9" r="2.4" stroke="#c89860" stroke-dasharray="8.4 6.8" transform="rotate(146 53.5 14.9)"/><circle cx="40.9" cy="27.0" r="3.4" stroke="#d8aa6c" stroke-dasharray="11.9 9.5" transform="rotate(60 40.9 27.0)"/><circle cx="35.5" cy="10.5" r="4.0" stroke="#6a4028" stroke-dasharray="13.9 11.1" transform="rotate(198 35.5 10.5)"/><circle cx="56.2" cy="18.0" r="3.6" stroke="#e4bc80" stroke-dasharray="12.7 10.1" transform="rotate(50 56.2 18.0)"/><circle cx="37.7" cy="3.4" r="2.6" stroke="#d8aa6c" stroke-dasharray="9.2 7.3" transform="rotate(114 37.7 3.4)"/><circle cx="50.1" cy="46.6" r="2.3" stroke="#b88450" stroke-dasharray="8.0 6.4" transform="rotate(269 50.1 46.6)"/><circle cx="53.3" cy="22.8" r="3.1" stroke="#e4bc80" stroke-dasharray="10.7 8.6" transform="rotate(97 53.3 22.8)"/><circle cx="77.4" cy="27.9" r="3.2" stroke="#a06c40" stroke-dasharray="11.1 8.9" transform="rotate(45 77.4 27.9)"/><circle cx="59.7" cy="35.8" r="3.9" stroke="#4a2c1c" stroke-dasharray="13.5 10.8" transform="rotate(33 59.7 35.8)"/><circle cx="87.7" cy="21.1" r="3.3" stroke="#e4bc80" stroke-dasharray="11.7 9.4" transform="rotate(343 87.7 21.1)"/><circle cx="84.3" cy="50.4" r="1.9" stroke="#b88450" stroke-dasharray="6.5 5.2" transform="rotate(153 84.3 50.4)"/><circle cx="78.2" cy="46.3" r="4.1" stroke="#6a4028" stroke-dasharray="14.4 11.5" transform="rotate(0 78.2 46.3)"/><circle cx="51.8" cy="53.6" r="3.8" stroke="#6a4028" stroke-dasharray="13.2 10.6" transform="rotate(350 51.8 53.6)"/><circle cx="41.6" cy="4.5" r="2.2" stroke="#2e1a14" stroke-dasharray="7.6 6.1" transform="rotate(349 41.6 4.5)"/><circle cx="31.7" cy="47.5" r="3.5" stroke="#6a4028" stroke-dasharray="12.2 9.8" transform="rotate(30 31.7 47.5)"/><circle cx="64.4" cy="0.3" r="3.5" stroke="#8a5a34" stroke-dasharray="12.3 9.8" transform="rotate(225 64.4 0.3)"/><circle cx="61.5" cy="24.2" r="3.6" stroke="#d8aa6c" stroke-dasharray="12.7 10.2" transform="rotate(25 61.5 24.2)"/><circle cx="61.2" cy="33.0" r="2.7" stroke="#4a2c1c" stroke-dasharray="9.6 7.6" transform="rotate(284 61.2 33.0)"/><circle cx="94.7" cy="14.7" r="2.6" stroke="#4a2c1c" stroke-dasharray="9.0 7.2" transform="rotate(171 94.7 14.7)"/></g></g></g></svg>
<div class="t" style="left:596px">Win the Battle Against<br>all Kinds of Hair Probl...</div><div class="s" style="left:596px">Skin &amp; Hair Academy</div>
<svg style="position:absolute;left:706px;top:4px;width:18px;height:18px" viewBox="706 4 18 18" fill="none" stroke="#14a6cd" stroke-width="1.700" stroke-linejoin="round" stroke-linecap="round"><path d="M709.700 7.800L720.500 13.400L713.500 17.200M709.700 7.800V19.200L712 18"/><path stroke-width="1.300" d="M713.300 10.800V16.800"/></svg>
</div>
<div class="adx"></div>
<div class="scb"></div>

<svg class="ov" viewBox="0 0 1082 633">
<!-- window controls -->
<g stroke-width="1" shape-rendering="crispEdges"><path d="M961 16.5h10"/><rect x="1007.5" y="11.5" width="9" height="9"/></g>
<path stroke-width="1" d="M1053 11l10 10M1063 11l-10 10"/>
<!-- sidebar: hamburger -->
<g stroke-width="1" shape-rendering="crispEdges"><path d="M15 51.5h20M15 56.5h20M15 61.5h20"/></g>
<!-- laptop -->
<path d="M20.5 108V100.500h11.500V108M19.500 108L18 110.500h16L32.500 108z"/>
<!-- clock -->
<circle cx="25.900" cy="154.900" r="7.600"/><path d="M25.500 149.500v6h4.500"/>
<!-- browse search -->
<path d="M20 204.500H18.500V197.500H29.500V199.500M28 207.500H20.500V199.500H32V203.500"/><circle cx="31" cy="207.300" r="2.700"/><path d="M29 209.300L25 213.300"/>
<!-- sync -->
<path d="M18.300 253A7.800 7.800 0 0 1 33.500 251.800M33.700 247.500V252.200H29M33.700 257A7.800 7.800 0 0 1 18.500 258.200M18.300 262.500V257.800H23"/>
<!-- bag -->
<path d="M19.500 301.500H31.500V312.500H19.500zM28.500 301.500V312.500M21.500 301.500V300a2.500 2.500 0 0 1 5 0v1.500M24.500 299a2.500 2.500 0 0 1 4.800 1v1.500"/>
<!-- like -->
<path d="M18.500 355.500H22.500L27.500 349.500C29.500 349.500 29 352.500 27.800 354.500H33.500C34 357 33 360 31.800 362H26L24 361.500H18.500z"/>
<!-- devices star -->
<path d="M20 406V402.500H31.500V409.500H29M18.500 406.500H21.500V411.500H18.500zM23.500 411.500H26.500"/><path fill="#fff" stroke="none" d="M30.500 408.500l1.100 2.900h3l-2.400 1.900.9 3-2.600-1.800-2.600 1.800.9-3-2.400-1.900h3z"/>
<!-- mail fwd -->
<path d="M28 461.500H18.500V452.500H33.500V459M18.500 452.500L26 457.500 33.500 452.500M28.500 461.500H34M31.500 459l2.500 2.500-2.500 2.500"/>
<!-- info -->
<circle cx="25.500" cy="506.400" r="7.500"/><path d="M25.500 504.500v6M25.500 501.800v1.400"/>
<!-- help -->
<path d="M21.500 553.500A4.200 4.200 0 0 1 29.800 553.500C29.800 556.500 25.600 557 25.600 561.500M25.600 563.500v1.700"/>
<!-- palette -->
<path d="M25.500 599.500A7.600 7.600 0 0 1 33 607C33 611 30 614.500 26.500 614.500C23.500 614.500 23.500 612.500 24.300 610.500C25 608.500 23 607.500 21 608.500C18.500 609.800 17.500 608.500 17.800 606.500A7.600 7.600 0 0 1 25.500 599.500z"/>
<g fill="#fff" stroke="none"><circle cx="22" cy="604" r="1"/><circle cx="25.800" cy="602.500" r="1"/><circle cx="29.300" cy="604.500" r="1"/><circle cx="29.800" cy="608.500" r="1"/><circle cx="27.800" cy="611.500" r="1"/></g>
<!-- search magnifier -->
<g stroke="rgba(255,255,255,.6)" stroke-width="1.100"><circle cx="351.500" cy="55.500" r="4.300"/><path d="M348.500 59L343 65"/></g>
<!-- toolbar: copy -->
<path d="M419.500 61.500H414.500V46.500H423.500L427.200 50.200M419.500 50.500H427.500L431.500 54.500V65.500H419.500zM427.500 50.500V54.500H431.500"/>
<!-- move -->
<path d="M498.500 51V46.500H483.500V65.500H496M498.500 55V57.500M492.500 53H501M495.500 50l-3 3 3 3M497 59.500Q497 57.800 498.500 57.800Q500 57.800 500 59.500V65.500H497z"/>
<!-- compress -->
<path stroke-width="1.400" d="M569 46.300L560.600 54.700M560.600 48.200V54.700H567.100M549.200 65.600L557.600 57.200M551.100 57.200H557.600V63.700"/>
<!-- trash -->
<path stroke-width="1.700" d="M618 49H635"/><path d="M623.500 49V46.500H629.500V49M619.800 49L620.800 63.500Q621 65.500 623 65.500H630Q632 65.500 632.200 63.500L633.200 49M623.500 52V62M626.500 52V62M629.500 52V62"/>
<!-- new file -->
<path d="M686.500 46.500H697.500L702.500 51.500V65.500H686.500zM697.500 46.500V51.500H702.500"/>
<!-- new folder -->
<path d="M757.500 57V46.500H771.500V58M753 61.500H761.500M757.500 57.500V65.500M761 65.500H769M769 59.500Q769 57.800 770.500 57.800Q772 57.800 772 59.500V65.500H769z"/>
<!-- select all -->
<g stroke-width="2" stroke-dasharray="1.700 0.770"><path d="M821 46.800H840"/><path d="M821 63.800H840"/><path d="M822 45.800V64.800"/><path d="M839 45.800V64.800"/></g>
<path stroke-width="1.500" d="M825.700 50.500H835.300V60.500H825.700zM830.500 50.500V60.500M825.700 55.500H835.300"/>
<!-- separator -->
<path stroke="rgba(255,255,255,.5)" stroke-width="1" shape-rendering="crispEdges" d="M881.500 44V64"/>
<!-- star -->
<path d="M931.00 47.40L933.29 53.84L940.13 54.03L934.71 58.21L936.64 64.77L931.00 60.90L925.36 64.77L927.29 58.21L921.87 54.03L928.71 53.84z"/>
<!-- pin -->
<path d="M995.300 59.600L989.400 65.400M1001.600 46.900L1008 53.400L1004.700 54.300L1000.600 58.600L999.800 63.400L991.500 55.300L996.500 54.400L1000.700 50.200z"/>
<!-- more -->
<g fill="#fff" stroke="none"><rect x="1050" y="56" width="2" height="2"/><rect x="1056" y="56" width="2" height="2"/><rect x="1062" y="56" width="2" height="2"/></g>
<!-- scroll chevrons -->
<g stroke="rgba(255,255,255,.8)" stroke-width="1.300"><path d="M546 123.700L549 120.700L552 123.700"/><path d="M546 534.300L549 537.300L552 534.300"/></g>
<!-- ad close -->
<path stroke-width="3" d="M1063.800 616l10.600 10.600M1074.400 616l-10.600 10.600"/>
</svg>
<div class="frame"></div>
</body></html>
